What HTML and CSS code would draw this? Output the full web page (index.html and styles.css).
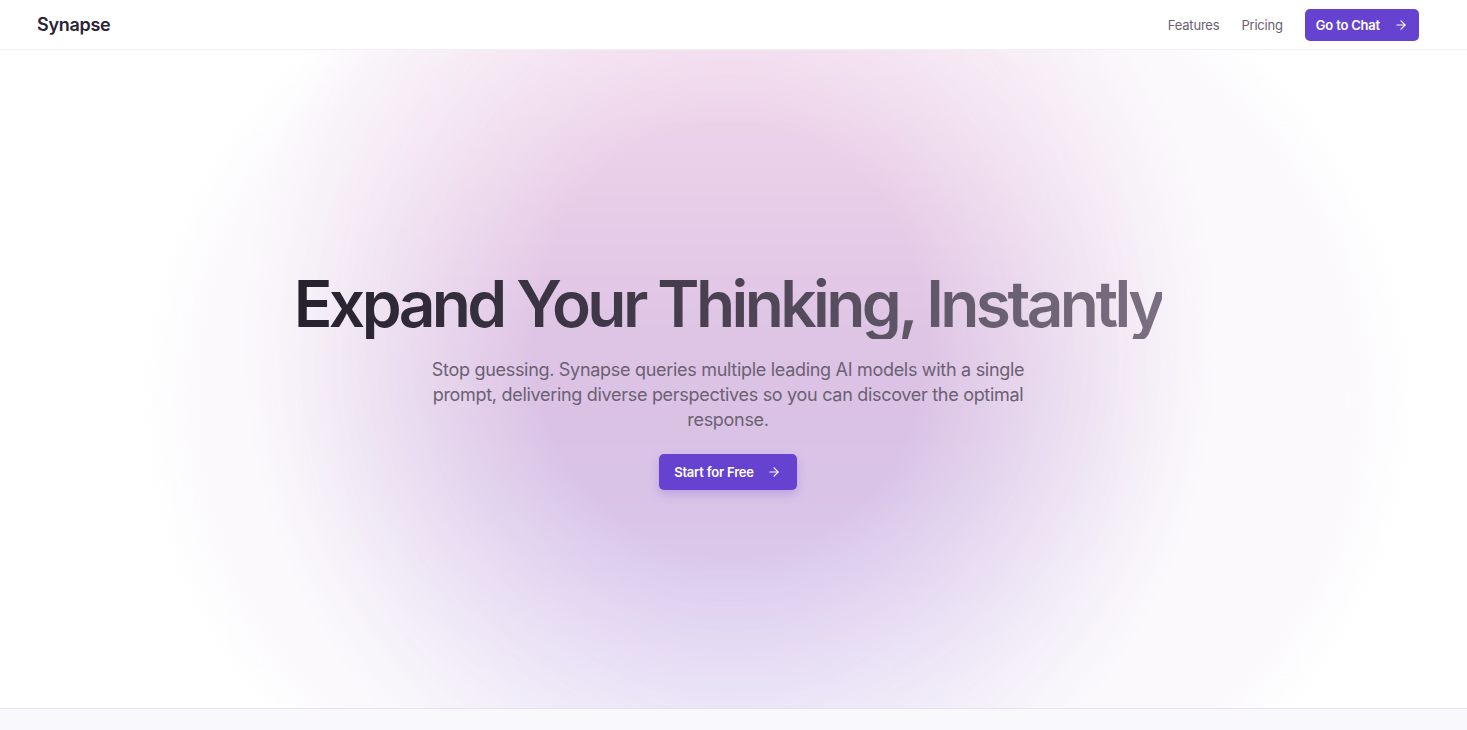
FILE: index.html
```html
<!DOCTYPE html>
<html lang="en">
<head>
<meta charset="utf-8">
<title>Synapse</title>
<link rel="stylesheet" href="styles.css">
</head>
<body>
<header class="nav">
  <div class="nav-inner">
    <a class="logo" href="#">Synapse</a>
    <nav class="links">
      <a href="#" class="link">Features</a>
      <a href="#" class="link">Pricing</a>
      <a href="#" class="btn btn-sm">Go to Chat
        <svg class="arrow" viewBox="0 0 24 24" width="14" height="14" fill="none" stroke="currentColor" stroke-width="2" stroke-linecap="round" stroke-linejoin="round"><path d="M5 12h14"/><path d="m12 5 7 7-7 7"/></svg>
      </a>
    </nav>
  </div>
</header>
<main>
  <section class="hero">
    <div class="glow-outer"></div>
    <div class="glow"></div>
    <div class="hero-content">
      <h1 class="title">Expand Your Thinking, Instantly</h1>
      <p class="lead">Stop guessing. Synapse queries multiple leading AI models with a single prompt, delivering diverse perspectives so you can discover the optimal response.</p>
      <a href="#" class="btn btn-lg">Start for Free
        <svg class="arrow" viewBox="0 0 24 24" width="14" height="14" fill="none" stroke="currentColor" stroke-width="2" stroke-linecap="round" stroke-linejoin="round"><path d="M5 12h14"/><path d="m12 5 7 7-7 7"/></svg>
      </a>
    </div>
  </section>
  <section class="next"></section>
</main>
</body>
</html>
```
FILE: styles.css
```css
* { box-sizing: border-box; }
html, body { margin: 0; padding: 0; }
body {
  font-family: Inter, "Noto Sans", "Liberation Sans", sans-serif;
  background: #ffffff;
  color: #2a2433;
  overflow-x: hidden;
}
a { text-decoration: none; color: inherit; }

.nav {
  height: 50px;
  border-bottom: 1px solid #f1eff4;
  background: #ffffff;
  position: relative;
  z-index: 2;
}
.nav-inner {
  height: 49px;
  display: flex;
  align-items: center;
  justify-content: space-between;
  padding: 0 48px 0 37px;
}
.logo {
  font-size: 18px;
  font-weight: 600;
  color: #2b2436;
  letter-spacing: -0.3px;
}
.links {
  display: flex;
  align-items: center;
  gap: 22px;
}
.link {
  font-size: 13px;
  color: #6a6073;
  font-weight: 400;
  letter-spacing: -0.2px;
}
.btn {
  display: inline-flex;
  align-items: center;
  justify-content: center;
  background: #6642d1;
  color: #ffffff;
  font-weight: 600;
  font-size: 13px;
  border-radius: 5px;
  letter-spacing: -0.2px;
}
.btn-sm {
  height: 32px;
  padding: 0 11px 0 11px;
  gap: 14px;
}
.btn-lg {
  height: 36px;
  padding: 0 16px 0 15px;
  gap: 13px;
  box-shadow: 0 4px 10px rgba(102, 66, 209, 0.25);
}
.arrow { display: block; }

.hero {
  position: relative;
  height: 658px;
  overflow: hidden;
  display: flex;
  align-items: center;
  justify-content: center;
  padding-right: 11px;
}
.glow-outer {
  position: absolute;
  left: 170px;
  width: 1215px;
  top: -150px;
  height: 1000px;
  border-radius: 50%;
  background: #fbf9fc;
  filter: blur(20px);
}
.glow {
  position: absolute;
  left: 240px;
  width: 980px;
  top: -250px;
  height: 1080px;
  border-radius: 50%;
  background: linear-gradient(180deg, #f4ddee 15%, #eacfe8 35%, #d8bfe3 58%, #dccff2 80%, #e4dcf5 100%);
  filter: blur(70px);
  -webkit-mask-image: radial-gradient(ellipse 50% 50% at 50% 50%, #000 40%, rgba(0,0,0,0.45) 72%, transparent 100%);
  mask-image: radial-gradient(ellipse 50% 50% at 50% 50%, #000 40%, rgba(0,0,0,0.45) 72%, transparent 100%);
}
.hero-content {
  position: relative;
  z-index: 1;
  display: flex;
  flex-direction: column;
  align-items: center;
  text-align: center;
}
.title {
  margin: 0;
  font-size: 64px;
  line-height: 70px;
  font-weight: 600;
  letter-spacing: -3.6px;
  background: linear-gradient(90deg, #27212e 0%, #463e4f 45%, #7a7082 100%);
  -webkit-background-clip: text;
  background-clip: text;
  color: transparent;
}
.lead {
  margin: 18px 0 22px;
  max-width: 600px;
  font-size: 18px;
  line-height: 25px;
  color: #6b6172;
  letter-spacing: -0.3px;
}
.next {
  height: 40px;
  border-top: 1px solid #ecdff0;
  background: #f9f8fc;
}
```
